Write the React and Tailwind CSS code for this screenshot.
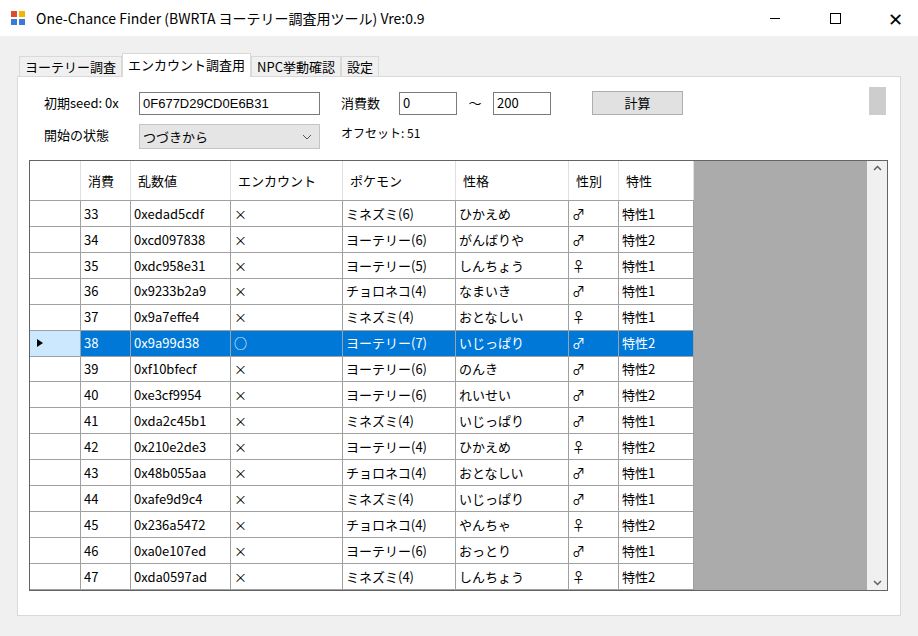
import React from 'react';

const rows = [
  ['33', '0xedad5cdf', '×', 'ミネズミ(6)', 'ひかえめ', '♂', '特性1'],
  ['34', '0xcd097838', '×', 'ヨーテリー(6)', 'がんばりや', '♂', '特性2'],
  ['35', '0xdc958e31', '×', 'ヨーテリー(5)', 'しんちょう', '♀', '特性1'],
  ['36', '0x9233b2a9', '×', 'チョロネコ(4)', 'なまいき', '♂', '特性1'],
  ['37', '0x9a7effe4', '×', 'ミネズミ(4)', 'おとなしい', '♀', '特性1'],
  ['38', '0x9a99d38', '○', 'ヨーテリー(7)', 'いじっぱり', '♂', '特性2'],
  ['39', '0xf10bfecf', '×', 'ヨーテリー(6)', 'のんき', '♂', '特性2'],
  ['40', '0xe3cf9954', '×', 'ヨーテリー(6)', 'れいせい', '♂', '特性2'],
  ['41', '0xda2c45b1', '×', 'ミネズミ(4)', 'いじっぱり', '♂', '特性1'],
  ['42', '0x210e2de3', '×', 'ヨーテリー(4)', 'ひかえめ', '♀', '特性2'],
  ['43', '0x48b055aa', '×', 'チョロネコ(4)', 'おとなしい', '♂', '特性1'],
  ['44', '0xafe9d9c4', '×', 'ミネズミ(4)', 'いじっぱり', '♂', '特性1'],
  ['45', '0x236a5472', '×', 'チョロネコ(4)', 'やんちゃ', '♀', '特性2'],
  ['46', '0xa0e107ed', '×', 'ヨーテリー(6)', 'おっとり', '♂', '特性1'],
  ['47', '0xda0597ad', '×', 'ミネズミ(4)', 'しんちょう', '♀', '特性2'],
];

const widths = ['w-[50px]', 'w-[100px]', 'w-[112px]', 'w-[113px]', 'w-[113px]', 'w-[50px]', 'w-[75px]'];
const heads = ['消費', '乱数値', 'エンカウント', 'ポケモン', '性格', '性別', '特性'];
const font = { fontFamily: '"Noto Sans CJK JP", "Liberation Sans", sans-serif' };

export default function App() {
  return (
    <div className="w-[918px] h-[636px] bg-[#f0f0f0] text-[13px] text-black overflow-hidden flex flex-col" style={font}>
      {/* title bar */}
      <div className="h-[36px] bg-white flex items-center shrink-0">
        <svg width="16" height="16" viewBox="0 0 16 16" className="ml-[10px]">
          <rect x="1" y="1" width="6" height="6" fill="#e04a2f" />
          <rect x="9" y="1" width="6" height="6" fill="#f4b400" />
          <rect x="1" y="9" width="6" height="6" fill="#3b7bd8" />
          <rect x="9" y="9" width="6" height="6" fill="#3b7bd8" />
        </svg>
        <span className="ml-[10px] text-[14px] flex-1">One-Chance Finder (BWRTA ヨーテリー調査用ツール) Vre:0.9</span>
        <div className="flex h-full">
          <div className="w-[46px] flex items-center justify-center"><div className="w-[10px] h-px bg-black" /></div>
          <div className="w-[46px] flex items-center justify-center ml-[14px]"><div className="w-[11px] h-[11px] border border-black" /></div>
          <div className="w-[46px] flex items-center justify-center ml-[14px] text-[18px] font-light">✕</div>
        </div>
      </div>
      {/* tabs */}
      <div className="flex items-end mt-[18px] ml-[19px] h-[23px] shrink-0 relative z-10">
        <div className="px-[5px] h-[21px] border border-[#d9d9d9] bg-[#f0f0f0] flex items-center">ヨーテリー調査</div>
        <div className="px-[5px] h-[24px] border border-b-0 border-[#d9d9d9] bg-white flex items-start pt-[1px]">エンカウント調査用</div>
        <div className="px-[5px] h-[21px] border border-[#d9d9d9] bg-[#f0f0f0] flex items-center">NPC挙動確認</div>
        <div className="px-[5px] h-[21px] border border-[#d9d9d9] bg-[#f0f0f0] flex items-center">設定</div>
      </div>
      <div className="ml-[17px] w-[884px] h-[540px] bg-white border border-[#d9d9d9] -mt-px flex flex-col">
        <div className="flex mt-[15px] ml-[26px] items-start">
          <div className="flex flex-col gap-[10px] w-[95px]">
            <div className="h-[22px] flex items-center">初期seed: 0x</div>
            <div className="h-[22px] flex items-center">開始の状態</div>
          </div>
          <div className="flex flex-col gap-[9px]">
            <div className="w-[181px] h-[23px] border border-[#7a7a7a] px-[3px] flex items-center" style={{ fontFamily: '"Liberation Sans Narrow", "Liberation Sans", sans-serif' }}>0F677D29CD0E6B31</div>
            <div className="w-[181px] h-[25px] border border-[#c4c4c4] bg-[#e5e5e5] px-[3px] flex items-center justify-between">
              <span>つづきから</span>
              <svg width="10" height="6" viewBox="0 0 10 6" className="mr-[4px]"><path d="M1 1l4 4 4-4" stroke="#555" fill="none" /></svg>
            </div>
          </div>
          <div className="flex flex-col gap-[10px] ml-[21px]">
            <div className="flex items-center h-[22px]">
              <span className="w-[58px]">消費数</span>
              <div className="w-[58px] h-[23px] border border-[#7a7a7a] px-[3px] flex items-center">0</div>
              <span className="w-[36px] text-center">～</span>
              <div className="w-[58px] h-[23px] border border-[#7a7a7a] px-[3px] flex items-center">200</div>
              <div className="ml-[41px] w-[91px] h-[24px] border border-[#adadad] bg-[#e1e1e1] flex items-center justify-center">計算</div>
            </div>
            <div className="h-[18px] text-[12px] flex items-center">オフセット: 51</div>
          </div>
        </div>
        {/* grid */}
        <div className="mt-[11px] ml-[11px] w-[859px] h-[431px] border border-[#646464] flex bg-[#ababab]">
          <div className="flex flex-col bg-white">
            <div className="flex h-[40px] border-b border-[#a0a0a0]">
              <div className="w-[51px] border-r border-[#e0e0e0]" />
              {heads.map((h, i) => (
                <div key={i} className={`${widths[i]} border-r border-[#e0e0e0] flex items-center px-[7px]`}>{h}</div>
              ))}
            </div>
            {rows.map((r, ri) => {
              const sel = ri === 5;
              return (
                <div key={ri} className={`flex h-[26px] ${sel ? 'bg-[#0078d7] text-white' : ''}`}>
                  <div className={`w-[51px] border-r border-b border-[#a0a0a0] flex items-center pl-[6px] ${sel ? 'bg-[#cce8ff]' : 'bg-white'}`}>
                    {sel && <svg width="8" height="10" viewBox="0 0 8 10"><path d="M1 1l6 4-6 4z" fill="#000" /></svg>}
                  </div>
                  {r.map((c, ci) => (
                    <div key={ci} className={`${widths[ci]} border-r border-b border-[#a0a0a0] flex items-center px-[3px] whitespace-nowrap`}>{c}</div>
                  ))}
                </div>
              );
            })}
          </div>
          <div className="flex-1" />
          <div className="w-[20px] bg-[#f0f0f0] flex flex-col items-center justify-between py-[4px]">
            <svg width="9" height="6" viewBox="0 0 9 6"><path d="M1 5l3.5-3.5L8 5" stroke="#606060" strokeWidth="1.5" fill="none" /></svg>
            <div className="w-[17px] h-[28px] bg-[#cdcdcd] mb-[300px] mt-[-250px]" />
            <svg width="9" height="6" viewBox="0 0 9 6"><path d="M1 1l3.5 3.5L8 1" stroke="#606060" strokeWidth="1.5" fill="none" /></svg>
          </div>
        </div>
      </div>
    </div>
  );
}
